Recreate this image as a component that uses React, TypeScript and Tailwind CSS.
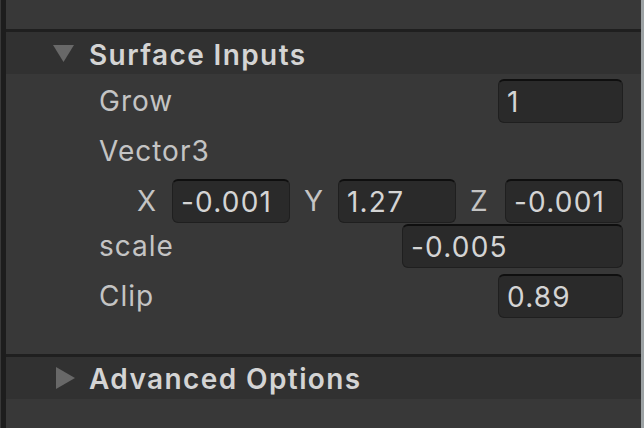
import React from "react";

const font = { fontFamily: "Inter, 'Noto Sans', sans-serif" };

function Field({ value, w }: { value: string; w: string }) {
  return (
    <div
      className={`${w} h-[44px] shrink-0 rounded-[6px] border border-[#1f1f1f] border-t-[#0f0f0f] border-t-2 bg-[#2a2a2a] pl-[8px] flex items-center text-[28px] tracking-[1.2px] text-[#d4d4d4]`}
    >
      {value}
    </div>
  );
}

function Row({ label, children, mt }: { label: string; children?: React.ReactNode; mt: string }) {
  return (
    <div className={`${mt} h-[44px] flex items-center pl-[93px] pr-[18px]`}>
      <span className="text-[28px] tracking-[1px] text-[#c4c4c4] flex-1">{label}</span>
      {children}
    </div>
  );
}

export default function App() {
  return (
    <div className="w-[644px] h-[428px] flex bg-[#383838] overflow-hidden" style={font}>
      <div className="w-[1px] bg-[#383838]" />
      <div className="w-[5px] bg-[#1d1d1d]" />
      <div className="flex-1 flex flex-col">
        <div className="h-[29px] shrink-0" />
        <div className="h-[3px] shrink-0 bg-[#1f1f1f]" />
        <div className="h-[42px] shrink-0 bg-[#313131] flex items-center pl-[47px]">
          <svg width="21" height="20" viewBox="0 0 21 20" className="mr-[15px]">
            <polygon points="0,2 21,2 10.5,19" fill="#686868" />
          </svg>
          <span className="pt-[4px] text-[28px] font-semibold tracking-[1.4px] text-[#d4d4d4]">Surface Inputs</span>
        </div>

        <Row label="Grow" mt="mt-[5px]">
          <Field value="1" w="w-[125px]" />
        </Row>
        <Row label="Vector3" mt="mt-[6px]" />
        <div className="mt-[6px] h-[44px] flex items-center pl-[131px]">
          <span className="w-[35px] text-[28px] text-[#c4c4c4]">X</span>
          <Field value="-0.001" w="w-[118px]" />
          <span className="w-[48px] pl-[14px] text-[28px] text-[#c4c4c4]">Y</span>
          <Field value="1.27" w="w-[118px]" />
          <span className="w-[49px] pl-[14px] text-[28px] text-[#c4c4c4]">Z</span>
          <Field value="-0.001" w="w-[118px]" />
        </div>
        <Row label="scale" mt="mt-[1px]">
          <Field value="-0.005" w="w-[221px]" />
        </Row>
        <Row label="Clip" mt="mt-[6px]">
          <Field value="0.89" w="w-[125px]" />
        </Row>

        <div className="mt-[36px] h-[3px] shrink-0 bg-[#1f1f1f]" />
        <div className="h-[42px] shrink-0 bg-[#313131] flex items-center pl-[49px]">
          <svg width="20" height="24" viewBox="0 0 20 24" className="mr-[14px]">
            <polygon points="1,1 20,12 1,23" fill="#686868" />
          </svg>
          <span className="pt-[2px] text-[28px] font-semibold tracking-[1.4px] text-[#d4d4d4]">Advanced Options</span>
        </div>
      </div>
      <div className="w-[3px] bg-[#9ca2a4]" />
    </div>
  );
}
